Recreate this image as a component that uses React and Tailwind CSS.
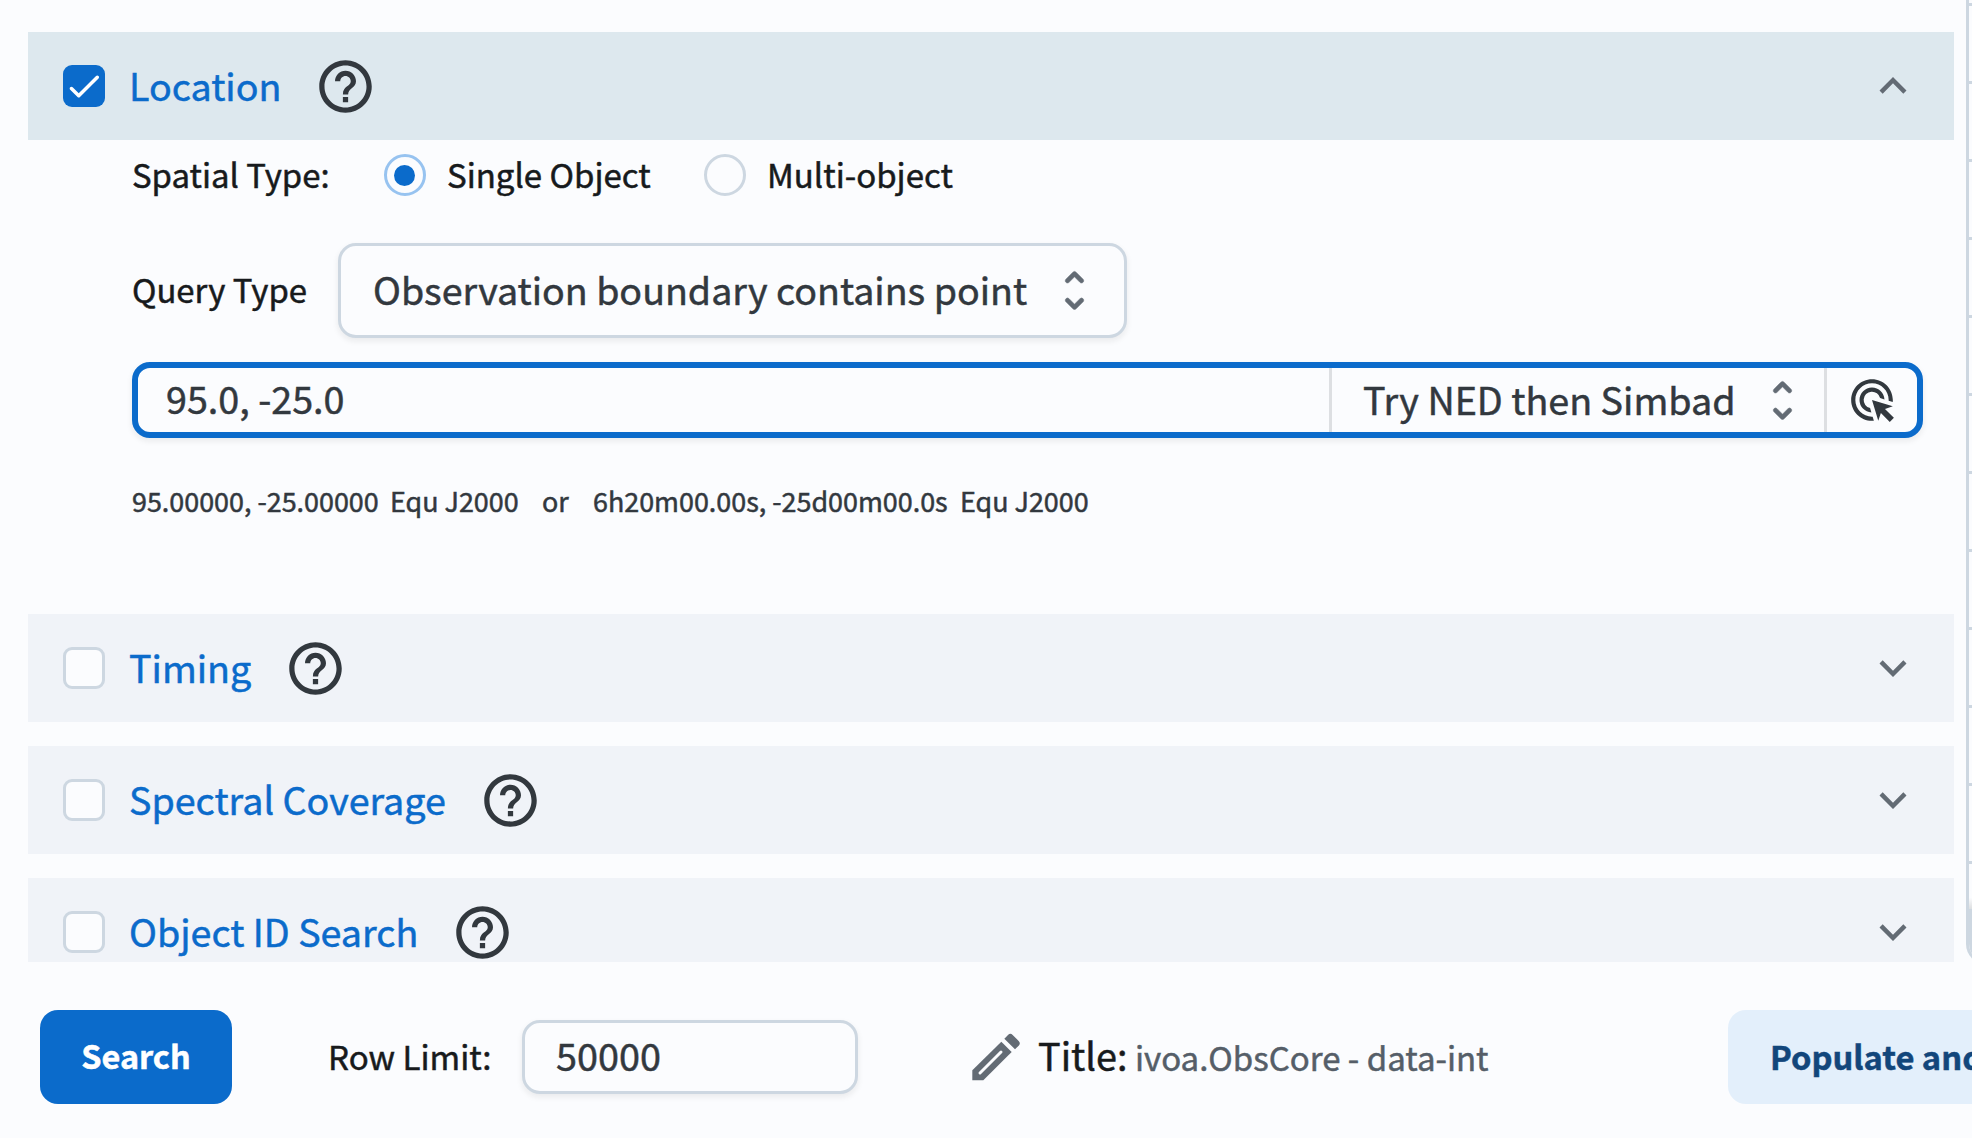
import { MdHelpOutline, MdExpandLess, MdExpandMore, MdAdsClick } from "react-icons/md";

function Checkbox({ checked }) {
  if (!checked) {
    return <span className="size-[42px] shrink-0 rounded-[9px] border-[3px] border-[#cdd7e1] bg-[#fbfcfe]" />;
  }
  return (
    <span className="size-[42px] shrink-0 rounded-[9px] bg-[#0b6bcb] text-white">
      <svg viewBox="0 0 24 24" className="size-full" fill="currentColor">
        <path d="M9 16.17 5.53 12.7c-.39-.39-1.02-.39-1.41 0-.39.39-.39 1.02 0 1.41l4.18 4.18c.39.39 1.02.39 1.41 0L20.29 7.71c.39-.39.39-1.02 0-1.41-.39-.39-1.02-.39-1.41 0L9 16.17z" />
      </svg>
    </span>
  );
}

function Unfold({ className }) {
  return (
    <svg viewBox="0 0 24 24" className={className} fill="#636b74" stroke="#636b74" strokeWidth="0.25">
      <path d="m12 5.83 2.46 2.46c.39.39 1.02.39 1.41 0 .39-.39.39-1.02 0-1.41L12.7 3.7a.9959.9959 0 0 0-1.41 0L8.12 6.88c-.39.39-.39 1.02 0 1.41.39.39 1.02.39 1.41 0L12 5.83zm0 12.34-2.46-2.46a.9959.9959 0 0 0-1.41 0c-.39.39-.39 1.02 0 1.41l3.17 3.18c.39.39 1.02.39 1.41 0l3.17-3.17c.39-.39.39-1.02 0-1.41a.9959.9959 0 0 0-1.41 0L12 18.17z" />
    </svg>
  );
}

function Pencil() {
  return (
    <svg viewBox="37 38 147 144" className="h-[48px] w-[49px] shrink-0" fill="#636b74">
      <path d="M38 150 125 64l31 31-85 85H38z" />
      <path d="M61 158 124 95" stroke="#fbfcfe" strokeWidth="9" strokeLinecap="round" />
      <path d="m134 55 11-11q7-7 14 0l18 18q7 7 0 14l-11 11z" />
    </svg>
  );
}

function SectionHeader({ title, open = false }) {
  const Chevron = open ? MdExpandLess : MdExpandMore;
  return (
    <div
      className={
        open
          ? "flex h-[108px] shrink-0 items-center bg-[#dde8ee] pl-[35px] pr-[34px]"
          : "flex h-[108px] shrink-0 items-center bg-[#f0f3f8] pl-[35px] pr-[34px]"
      }
    >
      <Checkbox checked={open} />
      <span className="ml-[24px] whitespace-nowrap pb-[3px] text-[37.65px] leading-[56px] text-[#0b6bcb]">{title}</span>
      <MdHelpOutline className="ml-[33px] mt-px size-[63px] shrink-0 text-[#32383e]" />
      <Chevron className="ml-auto size-[54px] shrink-0 text-[#636b74]" />
    </div>
  );
}

function Radio({ checked, label, className }) {
  return (
    <label className={className}>
      <span
        className={
          checked
            ? "flex size-[42px] items-center justify-center rounded-full border-[3px] border-[#97c3f0] pr-px"
            : "flex size-[42px] items-center justify-center rounded-full border-[3px] border-[#cdd7e1]"
        }
      >
        {checked && <span className="size-[21px] rounded-full bg-[#0b6bcb]" />}
      </span>
      <span className="ml-[21px] pb-[3px] text-[33px] leading-[42px]">{label}</span>
    </label>
  );
}

function LocationForm() {
  return (
    <div className="flex h-[474px] shrink-0 flex-col pl-[104px] pr-[31px] pt-[14px]">
      <div className="flex h-[42px] items-center whitespace-nowrap">
        <span className="w-[252px] pb-[3px] text-[32.9px] leading-[42px]">Spatial Type:</span>
        <Radio checked label="Single Object" className="flex w-[320px] items-center" />
        <Radio label="Multi-object" className="flex items-center" />
      </div>
      <div className="mt-[47px] flex h-[95px] items-center whitespace-nowrap">
        <span className="w-[206px] pb-[4px] text-[32.9px] leading-[42px]">Query Type</span>
        <div className="flex h-[95px] w-[789px] items-center justify-between rounded-[18px] border-[3px] border-[#cdd7e1] bg-[#fbfcfe] pl-[32px] pr-[23px] shadow-[0_3px_6px_rgba(21,21,21,0.08)]">
          <span className="pb-[4px] text-[37.6px] leading-[56px] text-[#32383e]">Observation boundary contains point</span>
          <Unfold className="size-[53px]" />
        </div>
      </div>
      <div className="mt-[24px] flex h-[76px] w-[1791px] items-stretch whitespace-nowrap rounded-[18px] border-[6px] border-[#0b6bcb] bg-[#fbfcfe] text-[37.7px] text-[#32383e] shadow-[0_3px_6px_rgba(21,21,21,0.08)]">
        <div className="flex flex-1 items-center pb-[3px] pl-[28px]">95.0, -25.0</div>
        <div className="flex w-[495px] items-center justify-between border-l-[3px] border-[#dddfe2] pl-[31px] pr-[15px]">
          <span className="pb-[2px]">Try NED then Simbad</span>
          <Unfold className="size-[53px]" />
        </div>
        <div className="flex w-[93px] items-center justify-center border-l-[3px] border-[#dddfe2]">
          <MdAdsClick className="size-[50px]" />
        </div>
      </div>
      <div className="mt-[43px] flex whitespace-nowrap text-[26.9px] leading-[40px] text-[#32383e]">
        <span className="w-[258px]">95.00000, -25.00000</span>
        <span className="w-[152px]">Equ J2000</span>
        <span className="w-[51px]">or</span>
        <span className="w-[367px]">6h20m00.00s, -25d00m00.0s</span>
        <span>Equ J2000</span>
      </div>
    </div>
  );
}

function Footer() {
  return (
    <div className="flex h-[176px] shrink-0 items-center whitespace-nowrap pl-[40px] pt-[14px]">
      <button className="h-[94px] w-[192px] shrink-0 rounded-[18px] bg-[#0b6bcb] pb-[4px] text-[32.4px] font-bold text-white">Search</button>
      <span className="ml-[96px] w-[194px] shrink-0 pb-[3px] text-[33.1px] leading-[42px]">Row Limit:</span>
      <div className="flex h-[74px] w-[336px] shrink-0 items-center rounded-[18px] border-[3px] border-[#cdd7e1] bg-[#fbfcfe] pb-[4px] pl-[31px] text-[37.8px] text-[#32383e] shadow-[0_3px_6px_rgba(21,21,21,0.08)]">
        50000
      </div>
      <div className="ml-[114px] flex w-[756px] shrink-0 items-center">
        <Pencil />
        <span className="ml-[17px] flex items-baseline pb-[3px]">
          <span className="w-[97px] text-[37.8px] leading-[56px]">Title:</span>
          <span className="text-[33px] leading-[56px] text-[#555e68]">ivoa.ObsCore - data-int</span>
        </span>
      </div>
      <button className="h-[94px] w-[420px] shrink-0 rounded-[18px] bg-[#e3effb] pb-[3px] pl-[42px] text-left text-[32.7px] font-bold text-[#12467b]">
        Populate and
      </button>
    </div>
  );
}

function TableEdge() {
  return (
    <div className="h-[962px] w-[6px] shrink-0 overflow-hidden">
      <div className="flex h-[964px] w-[60px] flex-col overflow-hidden rounded-bl-[20px] border-b-[3px] border-l-[3px] border-[#cdd7e1]">
        <div className="h-[6px] shrink-0 border-b-[3px] border-[#cdd7e1]" />
        {Array.from({ length: 11 }, (_, i) => (
          <div key={i} className="h-[78px] shrink-0 border-b-[3px] border-[#cdd7e1]" />
        ))}
        <div className="h-[45px] shrink-0 bg-linear-to-b from-[#fbfcfe] from-75% to-[#dcdee0]" />
        <div className="flex-1 bg-[#cdd7e1]" />
      </div>
    </div>
  );
}

export default function App() {
  return (
    <div className="flex h-[1138px] w-[1972px] flex-col overflow-hidden bg-[#fbfcfe] font-['Noto_Sans_CJK_SC','Open_Sans',sans-serif] text-[#171a1c] [-webkit-text-stroke:0.5px]">
      <div className="flex h-[962px] shrink-0">
        <div className="flex w-[1966px] shrink-0 flex-col overflow-hidden pl-[28px] pr-[12px] pt-[32px]">
          <SectionHeader title="Location" open />
          <LocationForm />
          <div className="flex flex-col gap-6">
            <SectionHeader title="Timing" />
            <SectionHeader title="Spectral Coverage" />
            <SectionHeader title="Object ID Search" />
          </div>
        </div>
        <TableEdge />
      </div>
      <Footer />
    </div>
  );
}
